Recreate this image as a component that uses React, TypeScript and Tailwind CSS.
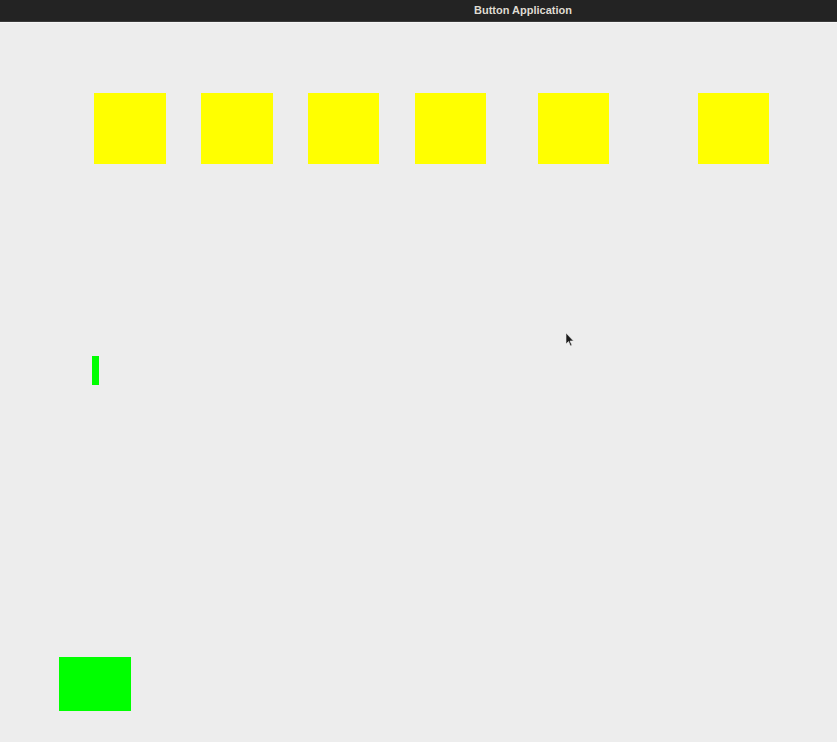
export default function App() {
  return (
    <div className="relative h-[742px] w-[837px] overflow-hidden bg-[#ededed] font-['Liberation_Sans',sans-serif]">
      {/* Title bar */}
      <header className="flex h-[22px] items-center bg-[#232323] border-b border-[#3a3a3a]">
        <span className="ml-[474px] text-[11px] font-bold text-[#dfdbd2]">
          Button Application
        </span>
      </header>
      <div className="h-px bg-[#f6f6f6]" />

      {/* Yellow buttons */}
      <div className="mt-[70px] flex">
        <div className="ml-[94px] h-[71px] w-[72px] bg-[#ffff00]" />
        <div className="ml-[35px] h-[71px] w-[72px] bg-[#ffff00]" />
        <div className="ml-[35px] h-[71px] w-[71px] bg-[#ffff00]" />
        <div className="ml-[36px] h-[71px] w-[71px] bg-[#ffff00]" />
        <div className="ml-[52px] h-[71px] w-[71px] bg-[#ffff00]" />
        <div className="ml-[89px] h-[71px] w-[71px] bg-[#ffff00]" />
      </div>

      {/* Small green bar */}
      <div className="ml-[92px] mt-[192px] h-[29px] w-[7px] bg-[#00ff00]" />

      {/* Green block */}
      <div className="ml-[59px] mt-[272px] h-[54px] w-[72px] bg-[#00ff00]" />

      {/* Mouse cursor */}
      <svg
        className="absolute left-[565px] top-[332px]"
        width="10"
        height="15"
        viewBox="0 0 10 15"
      >
        <path d="M1 1 L1 12 L3.5 9.5 L5.5 14 L7 13.3 L5 9 L8.5 9 Z" fill="#1a1a1a" stroke="#ededed" strokeWidth="0.6" />
      </svg>
    </div>
  );
}
